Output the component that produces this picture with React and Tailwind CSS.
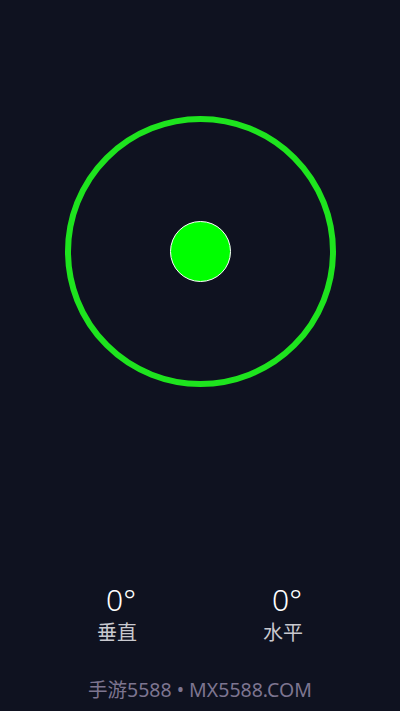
export default function App() {
  const font = { fontFamily: '"Noto Sans", "Noto Sans CJK SC", sans-serif' };
  return (
    <div className="w-[400px] h-[711px] bg-[#0f1220] flex flex-col items-center overflow-hidden" style={font}>
      <div className="mt-[116px] w-[271px] h-[271px] rounded-full border-[6px] border-[#1ee41e] flex items-center justify-center">
        <div className="w-[61px] h-[61px] rounded-full bg-[#00ff00] border border-white"></div>
      </div>
      <div className="mt-[197px] flex gap-[66px]">
        <div className="w-[100px] flex flex-col items-center">
          <div className="text-[30px] leading-[32px] text-white pl-[8px] font-light">0°</div>
          <div className="text-[20px] leading-[26px] text-[#c9c9cf] mt-[4px]">垂直</div>
        </div>
        <div className="w-[100px] flex flex-col items-center">
          <div className="text-[30px] leading-[32px] text-white pl-[8px] font-light">0°</div>
          <div className="text-[20px] leading-[26px] text-[#c9c9cf] mt-[4px]">水平</div>
        </div>
      </div>
      <div className="mt-[31px] text-[19.5px] leading-[26px] text-[#7d7590]">手游5588 • MX5588.COM</div>
    </div>
  );
}
